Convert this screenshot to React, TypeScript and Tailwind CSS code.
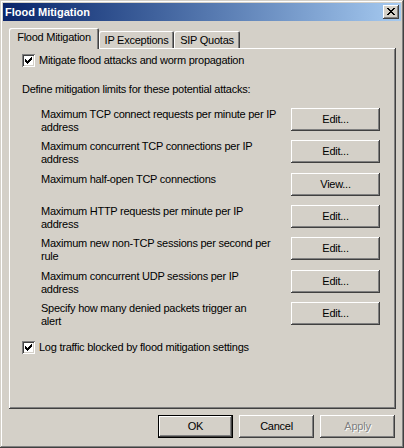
import React from "react";

const CheckMark = () => (
  <svg width="7" height="7" viewBox="0 0 7 7" shapeRendering="crispEdges">
    <rect x="6" y="0" width="1" height="1" fill="#000" />
    <rect x="5" y="1" width="2" height="1" fill="#000" />
    <rect x="0" y="2" width="1" height="1" fill="#000" />
    <rect x="4" y="2" width="3" height="1" fill="#000" />
    <rect x="0" y="3" width="2" height="1" fill="#000" />
    <rect x="3" y="3" width="3" height="1" fill="#000" />
    <rect x="0" y="4" width="5" height="1" fill="#000" />
    <rect x="1" y="5" width="3" height="1" fill="#000" />
    <rect x="2" y="6" width="1" height="1" fill="#000" />
  </svg>
);

const CloseGlyph = () => (
  <svg width="8" height="7" viewBox="0 0 8 7" shapeRendering="crispEdges">
    <rect x="0" y="0" width="2" height="1" fill="#000" />
    <rect x="6" y="0" width="2" height="1" fill="#000" />
    <rect x="1" y="1" width="2" height="1" fill="#000" />
    <rect x="5" y="1" width="2" height="1" fill="#000" />
    <rect x="2" y="2" width="4" height="1" fill="#000" />
    <rect x="3" y="3" width="2" height="1" fill="#000" />
    <rect x="2" y="4" width="4" height="1" fill="#000" />
    <rect x="1" y="5" width="2" height="1" fill="#000" />
    <rect x="5" y="5" width="2" height="1" fill="#000" />
    <rect x="0" y="6" width="2" height="1" fill="#000" />
    <rect x="6" y="6" width="2" height="1" fill="#000" />
  </svg>
);

const Checkbox = () => (
  <div className="w-[13px] h-[13px] shrink-0 bg-white flex items-center justify-center shadow-[inset_1px_1px_0_#808080,inset_-1px_-1px_0_#ffffff,inset_2px_2px_0_#404040,inset_-2px_-2px_0_#d4d0c8]">
    <CheckMark />
  </div>
);

const Btn = ({ label }: { label: string }) => (
  <div className="w-[89px] h-[23px] shrink-0 flex items-center justify-center bg-[#d4d0c8] shadow-[inset_-1px_-1px_0_#404040,inset_1px_1px_0_#ffffff,inset_-2px_-2px_0_#808080]">
    {label}
  </div>
);

const rows: { lines: string[]; btn: string; h: number }[] = [
  { lines: ["Maximum TCP connect requests per minute per IP", "address"], btn: "Edit...", h: 32 },
  { lines: ["Maximum concurrent TCP connections per IP", "address"], btn: "Edit...", h: 33 },
  { lines: ["Maximum half-open TCP connections"], btn: "View...", h: 32 },
  { lines: ["Maximum HTTP requests per minute per IP", "address"], btn: "Edit...", h: 32 },
  { lines: ["Maximum new non-TCP sessions per second per", "rule"], btn: "Edit...", h: 33 },
  { lines: ["Maximum concurrent UDP sessions per IP", "address"], btn: "Edit...", h: 32 },
  { lines: ["Specify how many denied packets trigger an", "alert"], btn: "Edit...", h: 23 },
];

export default function App() {
  return (
    <div className="w-[404px] h-[448px] bg-[#d4d0c8] p-[3px] flex flex-col text-[11px] leading-[13px] tracking-[-0.25px] text-black font-['Liberation_Sans',Arial,sans-serif] shadow-[inset_-1px_-1px_0_#404040,inset_1px_1px_0_#d4d0c8,inset_-2px_-2px_0_#808080,inset_2px_2px_0_#ffffff]">
      {/* Title bar */}
      <div className="h-[18px] shrink-0 flex items-center justify-between pl-[2px] pr-[2px] bg-linear-to-r from-[#0a246a] to-[#a6caf0]">
        <span className="text-white font-bold text-[11px] leading-[18px] tracking-normal">Flood Mitigation</span>
        <div className="w-[16px] h-[14px] bg-[#d4d0c8] flex items-start justify-start pl-[4px] pt-[3px] shadow-[inset_-1px_-1px_0_#404040,inset_1px_1px_0_#ffffff,inset_-2px_-2px_0_#808080]">
          <CloseGlyph />
        </div>
      </div>

      {/* Tabs + panel */}
      <div className="mt-[7px] ml-[6px] mr-[5px] flex flex-col">
        <div className="relative z-10 h-[20px] flex items-end">
          <div className="w-[90px] h-[21px] -mb-px bg-[#d4d0c8] rounded-t-[2px] flex justify-center pt-[3px] shadow-[inset_1px_1px_0_#ffffff,inset_-1px_0_0_#404040,inset_-2px_0_0_#808080]">
            Flood Mitigation
          </div>
          <div className="w-[75px] h-[17px] bg-[#d4d0c8] rounded-t-[2px] flex justify-center pt-[3px] shadow-[inset_1px_1px_0_#ffffff,inset_-1px_0_0_#404040,inset_-2px_0_0_#808080]">
            IP Exceptions
          </div>
          <div className="w-[66px] h-[17px] bg-[#d4d0c8] rounded-t-[2px] flex justify-center pt-[3px] shadow-[inset_1px_1px_0_#ffffff,inset_-1px_0_0_#404040,inset_-2px_0_0_#808080]">
            SIP Quotas
          </div>
        </div>
        <div className="h-[361px] flex flex-col pl-[13px] pr-[16px] pt-[6px] shadow-[inset_-1px_-1px_0_#404040,inset_1px_1px_0_#ffffff,inset_-2px_-2px_0_#808080]">
          <div className="flex items-center gap-[4px]">
            <Checkbox />
            <span>Mitigate flood attacks and worm propagation</span>
          </div>
          <div className="mt-[16px]">Define mitigation limits for these potential attacks:</div>
          <div className="mt-[12px] flex flex-col">
            {rows.map((r, i) => (
              <div key={i} className="flex items-start justify-between" style={{ height: r.h }}>
                <div className="ml-[19px] whitespace-nowrap">
                  {r.lines.map((l, j) => (
                    <div key={j}>{l}</div>
                  ))}
                </div>
                <Btn label={r.btn} />
              </div>
            ))}
          </div>
          <div className="mt-[16px] flex items-center gap-[4px]">
            <Checkbox />
            <span>Log traffic blocked by flood mitigation settings</span>
          </div>
        </div>
      </div>

      {/* Dialog buttons */}
      <div className="mt-[6px] pr-[6px] flex justify-end gap-[6px]">
        <div className="w-[75px] h-[23px] flex items-center justify-center bg-[#d4d0c8] shadow-[inset_0_0_0_1px_#000000,inset_-2px_-2px_0_#404040,inset_2px_2px_0_#ffffff,inset_-3px_-3px_0_#808080]">
          OK
        </div>
        <div className="w-[75px] h-[23px] flex items-center justify-center bg-[#d4d0c8] shadow-[inset_-1px_-1px_0_#404040,inset_1px_1px_0_#ffffff,inset_-2px_-2px_0_#808080]">
          Cancel
        </div>
        <div className="w-[75px] h-[23px] flex items-center justify-center bg-[#d4d0c8] text-[#808080] text-shadow-[1px_1px_0_#ffffff] shadow-[inset_-1px_-1px_0_#404040,inset_1px_1px_0_#ffffff,inset_-2px_-2px_0_#808080]">
          Apply
        </div>
      </div>
    </div>
  );
}
